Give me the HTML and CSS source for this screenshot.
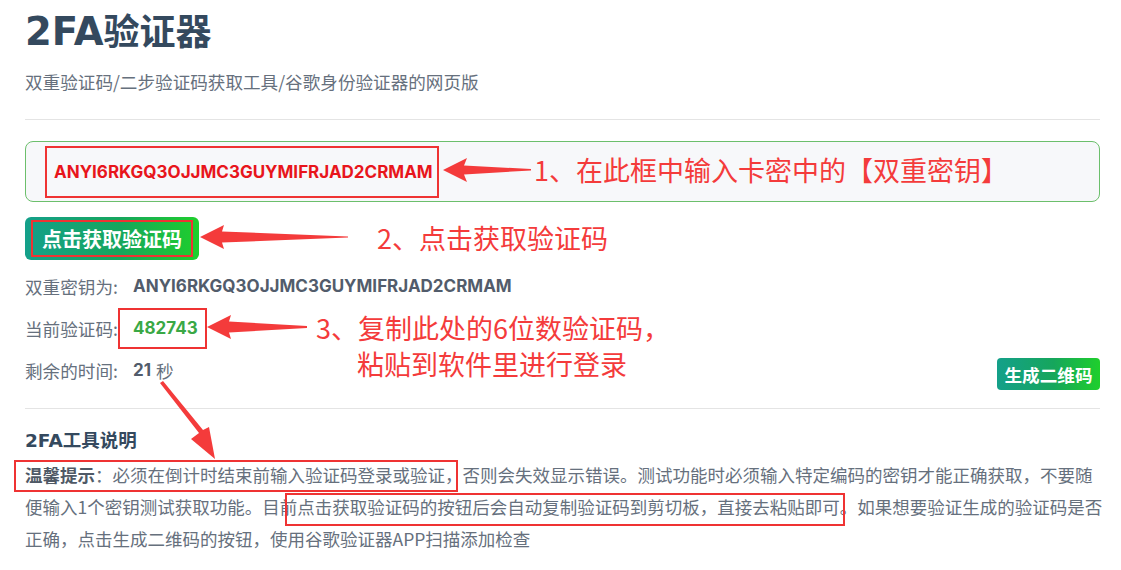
FILE: index.html
```html
<!DOCTYPE html>
<html lang="zh-CN">
<head>
<meta charset="utf-8">
<title>2FA验证器</title>
<link rel="stylesheet" href="styles.css">
</head>
<body>
<div class="page">
  <h1 class="title"><span class="title-latin">2FA</span>验证器</h1>
  <p class="subtitle">双重验证码/二步验证码获取工具/谷歌身份验证器的网页版</p>
  <hr class="rule">

  <div class="key-box">
    <span class="key-input">ANYI6RKGQ3OJJMC3GUYMIFRJAD2CRMAM</span>
  </div>

  <button class="btn btn-get"><span class="btn-get-inner">点击获取验证码</span></button>

  <div class="info-row">
    <span class="label">双重密钥为:</span>
    <span class="value">ANYI6RKGQ3OJJMC3GUYMIFRJAD2CRMAM</span>
  </div>
  <div class="info-row">
    <span class="label">当前验证码:</span>
    <span class="code-box"><span class="code">482743</span></span>
  </div>
  <div class="info-row info-row-last">
    <span class="label">剩余的时间:</span>
    <span class="value">21</span><span class="unit">秒</span>
    <button class="btn btn-qr">生成二维码</button>
  </div>

  <hr class="rule rule-2">

  <h3 class="section-title">2FA工具说明</h3>
  <p class="desc"><b>温馨提示</b>：必须在倒计时结束前输入验证码登录或验证，否则会失效显示错误。测试功能时必须输入特定编码的密钥才能正确获取，不要随便输入1个密钥测试获取功能。目前点击获取验证码的按钮后会自动复制验证码到剪切板，直接去粘贴即可。如果想要验证生成的验证码是否正确，点击生成二维码的按钮，使用谷歌验证器APP扫描添加检查</p>

  <!-- annotation overlays -->
  <div class="note note-1">1、在此框中输入卡密中的【双重密钥】</div>
  <div class="note note-2">2、点击获取验证码</div>
  <div class="note note-3">3、复制此处的6位数验证码，<br><span class="indent">粘贴到软件里进行登录</span></div>

  <svg class="arrow arrow-1" width="90" height="26" viewBox="0 0 90 26"><polygon points="0,13 24,1 21,8.5 88,12 88,13.5 21,17.5 24,25" fill="#f43b3b"/></svg>
  <svg class="arrow arrow-2" width="150" height="26" viewBox="0 0 150 26"><polygon points="0,13 24,1 22,7.5 148,12.5 148,13.5 22,18.5 24,25" fill="#f43b3b"/></svg>
  <svg class="arrow arrow-3" width="102" height="26" viewBox="0 0 102 26"><polygon points="0,13 24,1 22,7.5 100,12 100,14 22,18.5 24,25" fill="#f43b3b"/></svg>
  <svg class="arrow arrow-4" width="80" height="90" viewBox="0 0 80 90"><polygon points="3,2 42,52 34,58 58,78 52,46 46,49 6,0" fill="#f43b3b"/></svg>

  <div class="mark mark-1"></div>
  <div class="mark mark-2"></div>
</div>
</body>
</html>
```
FILE: styles.css
```css
html, body {
  margin: 0;
  padding: 0;
  background: #ffffff;
}
body {
  font-family: "Noto Sans CJK SC", "Liberation Sans", sans-serif;
  color: #5f6b7a;
}
.page {
  position: relative;
  width: 1075px;
  padding: 10px 21px 0 25px;
}
.title {
  margin: 0;
  font-family: "DejaVu Sans", "Noto Sans CJK SC", sans-serif;
  font-size: 36px;
  line-height: 44px;
  font-weight: 700;
  color: #34495e;
}
.title-latin {
  font-size: 38.5px;
}
.subtitle {
  margin: 14px 0 0;
  font-size: 17.6px;
  line-height: 26px;
  color: #66707d;
}
.rule {
  margin: 24px 0 0;
  border: 0;
  border-top: 1px solid #e4e4e4;
  height: 0;
}
.key-box {
  margin-top: 21px;
  height: 59px;
  border: 1px solid #6cbf6c;
  border-radius: 8px;
  background: #f7f8fa;
  display: flex;
  align-items: center;
  padding-left: 19px;
}
.key-input {
  display: flex;
  align-items: center;
  height: 48px;
  padding: 0 4px 0 7px;
  border: 2px solid #ef3333;
  font-family: "Inter", sans-serif;
  font-weight: 700;
  font-size: 17px;
  color: #e8151b;
}
.btn {
  font-family: "Noto Sans CJK SC", sans-serif;
  font-weight: 700;
  color: #fff;
  border: 0;
  cursor: pointer;
  background: linear-gradient(90deg, #14a08a 0%, #16a65c 55%, #1fcf2c 100%);
}
.btn-get {
  display: flex;
  margin-top: 15px;
  width: 174px;
  height: 43px;
  padding: 3px 6px;
  border-radius: 6px;
}
.btn-get-inner {
  flex: 1;
  display: flex;
  align-items: center;
  justify-content: center;
  border: 2px solid #ef3333;
  font-size: 20px;
}
.info-row {
  display: flex;
  align-items: center;
  height: 42px;
  font-size: 17.6px;
}
.btn-get + .info-row {
  margin-top: 5px;
}
.label {
  width: 108px;
  color: #66707d;
}
.value {
  font-family: "Inter", sans-serif;
  font-weight: 700;
  font-size: 17px;
  color: #525c6b;
}
.unit {
  margin-left: 5px;
  color: #66707d;
}
.code-box {
  margin-left: -15px;
  display: flex;
  align-items: center;
  height: 37px;
  padding: 0 7px 0 13px;
  border: 2px solid #ef3333;
}
.code {
  font-family: "Inter", sans-serif;
  font-weight: 700;
  font-size: 17px;
  color: #3aa845;
}
.btn-qr {
  margin-left: auto;
  margin-top: 8px;
  width: 103px;
  height: 32px;
  padding: 0;
  border-radius: 4px;
  font-size: 17.6px;
}
.rule-2 {
  margin-top: 17px;
}
.section-title {
  margin: 17px 0 0;
  font-family: "DejaVu Sans", "Noto Sans CJK SC", sans-serif;
  font-size: 18.5px;
  line-height: 30px;
  font-weight: 700;
  color: #34495e;
}
.desc {
  margin: 3px -6px 0 0;
  font-size: 17.5px;
  line-height: 32px;
  color: #66707d;
}
.desc b {
  color: #4f5966;
}

/* annotation overlays */
.note {
  position: absolute;
  font-family: "Noto Sans CJK SC", sans-serif;
  font-size: 27px;
  line-height: 36px;
  color: #f43b3b;
  white-space: nowrap;
}
.note-1 { left: 534px; top: 152px; }
.note-2 { left: 377px; top: 220px; }
.note-3 { left: 316px; top: 310px; }
.note-3 .indent { padding-left: 41px; }
.arrow {
  position: absolute;
  display: block;
}
.arrow-1 { left: 443px; top: 157px; }
.arrow-2 { left: 200px; top: 224px; }
.arrow-3 { left: 207px; top: 314px; }
.arrow-4 { left: 157px; top: 381px; }
.mark {
  position: absolute;
  border: 2px solid #ef3333;
}
.mark-1 { left: 14px; top: 460px; width: 440px; height: 28px; }
.mark-2 { left: 285px; top: 493px; width: 556px; height: 29px; }
```
